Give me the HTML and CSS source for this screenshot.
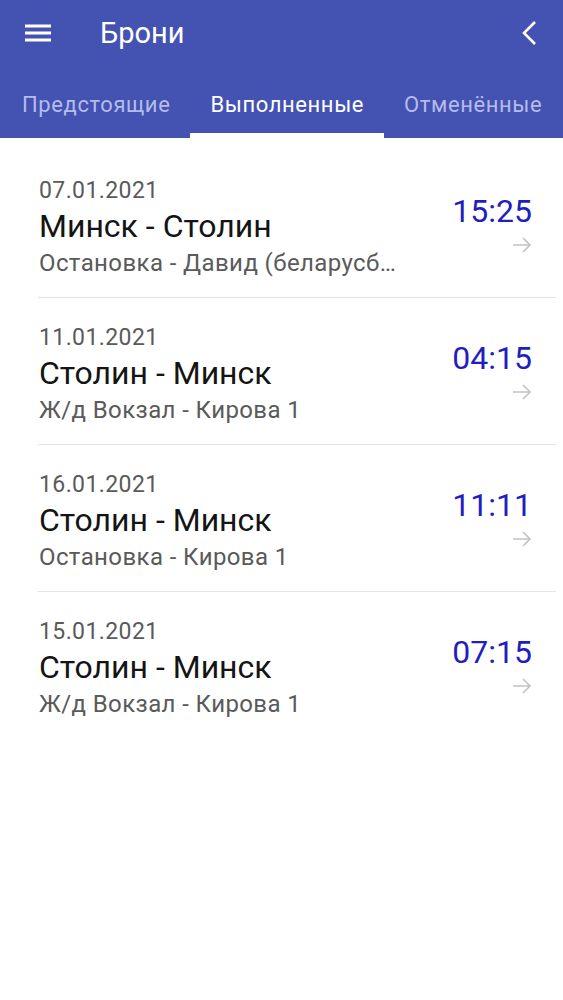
FILE: index.html
```html
<!DOCTYPE html>
<html lang="ru">
<head>
    <meta charset="UTF-8">
    <meta name="viewport" content="width=device-width, initial-scale=1.0">
    <title>Брони</title>
    <link rel="stylesheet" href="styles.css">
</head>
<body>
    <!-- Верхняя панель -->
    <header class="appbar">
        <div class="toolbar">
            <button class="icon-btn menu-btn" aria-label="Меню">
                <svg width="26" height="20" viewBox="0 0 26 20">
                    <path d="M0 3h26M0 10h26M0 17h26" stroke="#fff" stroke-width="3"/>
                </svg>
            </button>
            <div class="title">Брони</div>
            <button class="icon-btn back-btn" aria-label="Назад">
                <svg width="20" height="26" viewBox="0 0 20 26">
                    <path d="M16 2L5 13l11 11" fill="none" stroke="#fff" stroke-width="2.6"/>
                </svg>
            </button>
        </div>
        <nav class="tabs">
            <a href="#" class="tab">Предстоящие</a>
            <a href="#" class="tab active">Выполненные</a>
            <a href="#" class="tab">Отменённые</a>
        </nav>
    </header>

    <!-- Список броней -->
    <main class="booking-list">
        <div class="booking">
            <div class="info">
                <div class="date">07.01.2021</div>
                <div class="route">Минск - Столин</div>
                <div class="stop">Остановка - Давид (беларусб…</div>
            </div>
            <div class="side">
                <div class="time">15:25</div>
                <svg class="arrow" width="20" height="16" viewBox="0 0 20 16"><path d="M1 8h17M11 1l7 7-7 7" fill="none" stroke="#c2c2c2" stroke-width="1.6"/></svg>
            </div>
        </div>
        <div class="booking">
            <div class="info">
                <div class="date">11.01.2021</div>
                <div class="route">Столин - Минск</div>
                <div class="stop">Ж/д Вокзал - Кирова 1</div>
            </div>
            <div class="side">
                <div class="time">04:15</div>
                <svg class="arrow" width="20" height="16" viewBox="0 0 20 16"><path d="M1 8h17M11 1l7 7-7 7" fill="none" stroke="#c2c2c2" stroke-width="1.6"/></svg>
            </div>
        </div>
        <div class="booking">
            <div class="info">
                <div class="date">16.01.2021</div>
                <div class="route">Столин - Минск</div>
                <div class="stop">Остановка - Кирова 1</div>
            </div>
            <div class="side">
                <div class="time">11:11</div>
                <svg class="arrow" width="20" height="16" viewBox="0 0 20 16"><path d="M1 8h17M11 1l7 7-7 7" fill="none" stroke="#c2c2c2" stroke-width="1.6"/></svg>
            </div>
        </div>
        <div class="booking last">
            <div class="info">
                <div class="date">15.01.2021</div>
                <div class="route">Столин - Минск</div>
                <div class="stop">Ж/д Вокзал - Кирова 1</div>
            </div>
            <div class="side">
                <div class="time">07:15</div>
                <svg class="arrow" width="20" height="16" viewBox="0 0 20 16"><path d="M1 8h17M11 1l7 7-7 7" fill="none" stroke="#c2c2c2" stroke-width="1.6"/></svg>
            </div>
        </div>
    </main>
</body>
</html>
```

FILE: styles.css
```css
/* Цвета */
:root {
    --primary: #4452b1;
    --tab-inactive: #b4bcec;
    --text-primary: #141414;
    --text-secondary: #5a5a5a;
    --time-blue: #1f1fbf;
    --divider: #e4e4e4;
}

body {
    margin: 0;
    font-family: Roboto, "Noto Sans", sans-serif;
    background: #fff;
    color: var(--text-primary);
}

/* Верхняя панель */
.appbar {
    background: var(--primary);
    color: #fff;
}

.toolbar {
    display: flex;
    align-items: center;
    height: 66px;
    padding: 0 24px 0 25px;
}

.icon-btn {
    background: none;
    border: 0;
    padding: 0;
    display: flex;
    cursor: pointer;
}

.title {
    flex-grow: 1;
    margin-left: 49px;
    font-size: 29px;
}

.tabs {
    display: flex;
    height: 72px;
    padding-left: 2px;
}

.tab {
    display: flex;
    align-items: center;
    padding: 10px 20px 0;
    color: var(--tab-inactive);
    text-decoration: none;
    font-size: 22px;
    letter-spacing: 0.6px;
    white-space: nowrap;
    border-bottom: 5px solid transparent;
    box-sizing: border-box;
}

.tab.active {
    color: #fff;
    border-bottom-color: #fff;
}

/* Список броней */
.booking-list {
    padding-top: 13px;
}

.booking {
    display: flex;
    margin: 0 7px 0 38px;
    padding: 25px 24px 17px 1px;
    border-bottom: 1px solid var(--divider);
}

.booking.last {
    border-bottom: 0;
}

.booking .info {
    flex-grow: 1;
    min-width: 0;
}

.booking .date {
    font-size: 23px;
    letter-spacing: 0.4px;
    line-height: 30px;
    color: var(--text-secondary);
}

.booking .route {
    font-size: 32px;
    line-height: 40px;
}

.booking .stop {
    font-size: 24px;
    letter-spacing: 0.4px;
    line-height: 34px;
    color: var(--text-secondary);
    white-space: nowrap;
}

.booking .side {
    display: flex;
    flex-direction: column;
    align-items: flex-end;
    padding-top: 15px;
}

.booking .time {
    font-size: 32px;
    line-height: 40px;
    color: var(--time-blue);
}

.booking .arrow {
    margin-top: 6px;
}
```
